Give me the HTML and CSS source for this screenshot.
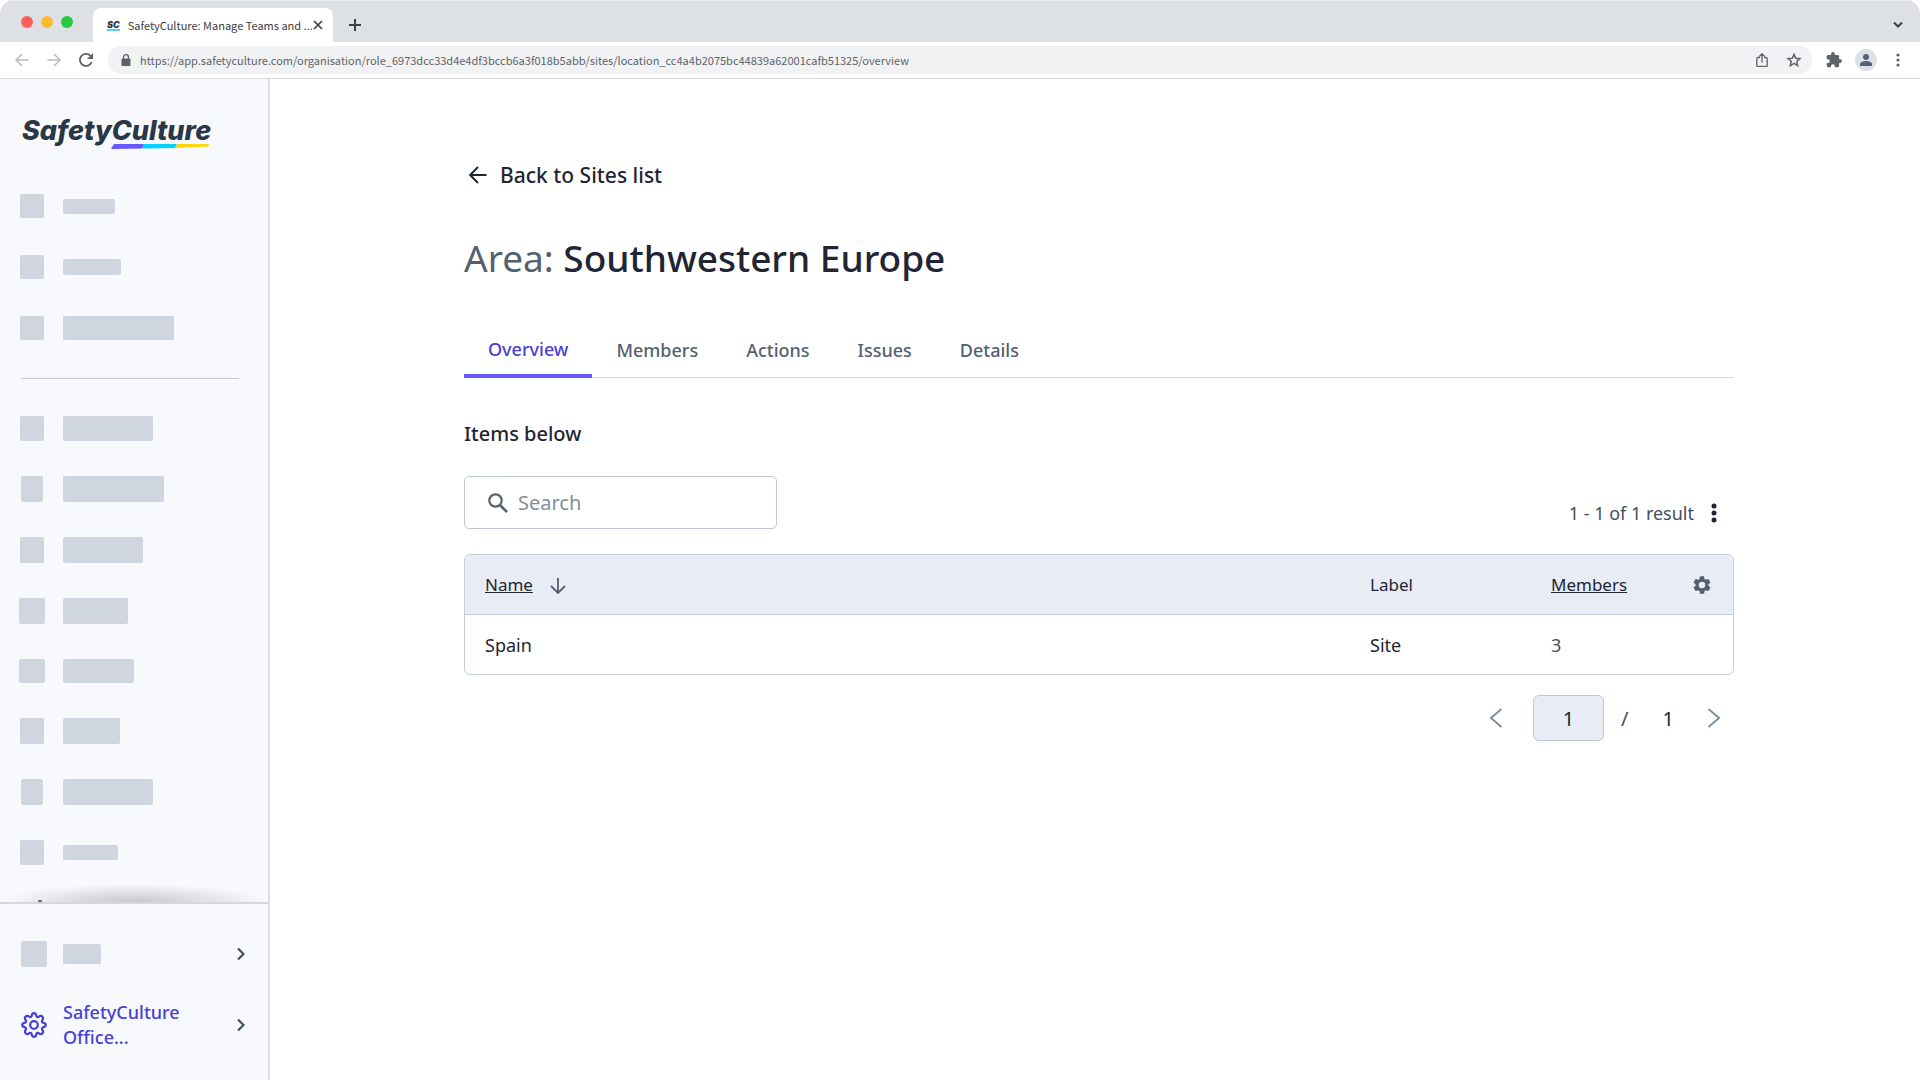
FILE: index.html
```html
<!DOCTYPE html>
<html lang="en">
<head>
  <meta charset="UTF-8" />
  <meta name="viewport" content="width=device-width, initial-scale=1.0" />
  <title>SafetyCulture: Manage Teams and Sites</title>
  <link rel="stylesheet" href="styles.css">
</head>
<body>
  <div class="browser">
    <div class="tab-strip">
      <div class="lights">
        <span class="light red"></span>
        <span class="light yellow"></span>
        <span class="light green"></span>
      </div>
      <div class="browser-tab">
        <span class="favicon">SC</span>
        <span class="tab-title">SafetyCulture: Manage Teams and ...</span>
        <button class="icon-btn" aria-label="Close tab">
          <svg width="10" height="10" viewBox="0 0 10 10"><path d="M1 1l8 8M9 1L1 9" stroke="#3c4043" stroke-width="1.700" fill="none"/></svg>
        </button>
      </div>
      <button class="icon-btn new-tab" aria-label="New tab">
        <svg width="12" height="12" viewBox="0 0 12 12"><path d="M6 0v12M0 6h12" stroke="#3c4043" stroke-width="2" fill="none"/></svg>
      </button>
      <button class="icon-btn tab-search" aria-label="Search tabs">
        <svg width="10" height="8" viewBox="0 0 10 8"><path d="M1 1.500l4 4 4-4" stroke="#3c4043" stroke-width="2" fill="none"/></svg>
      </button>
    </div>

    <div class="toolbar">
      <button class="icon-btn" aria-label="Back">
        <svg width="14" height="14" viewBox="0 0 14 14"><path d="M13.500 7H1.500M7 1L1 7l6 6" stroke="#babcbe" stroke-width="1.500" fill="none"/></svg>
      </button>
      <button class="icon-btn" aria-label="Forward">
        <svg width="14" height="14" viewBox="0 0 14 14"><path d="M.5 7h12M7 1l6 6-6 6" stroke="#babcbe" stroke-width="1.500" fill="none"/></svg>
      </button>
      <button class="icon-btn" aria-label="Reload">
        <svg width="14" height="14" viewBox="0 0 14 14"><path d="M12.600 9A6 6 0 1 1 11.500 3" stroke="#5f6368" stroke-width="1.800" fill="none"/><path d="M14 0v6H8z" fill="#5f6368"/></svg>
      </button>
      <div class="address">
        <svg width="10" height="12" viewBox="0 0 10 12"><path d="M2.500 5V3.200a2.500 2.500 0 0 1 5 0V5" stroke="#5f6368" stroke-width="1.300" fill="none"/><rect x="0.500" y="4.500" width="9" height="7.500" rx="1" fill="#5f6368"/></svg>
        <input class="url" type="text" aria-label="Address" value="https://app.safetyculture.com/organisation/role_6973dcc33d4e4df3bccb6a3f018b5abb/sites/location_cc4a4b2075bc44839a62001cafb51325/overview" />
        <button class="icon-btn" aria-label="Share">
          <svg width="12" height="14" viewBox="0 0 12 14"><path d="M4 4.500H1.800a1 1 0 0 0-1 1v7a1 1 0 0 0 1 1h8.400a1 1 0 0 0 1-1v-7a1 1 0 0 0-1-1H8M6 9.500V1M3.300 3.500L6 .8l2.700 2.700" stroke="#5f6368" stroke-width="1.300" fill="none"/></svg>
        </button>
        <button class="icon-btn" aria-label="Bookmark">
          <svg width="16" height="16" viewBox="0 0 24 24"><path d="M12 3.500l2.600 6 6.400.5-4.900 4.200 1.500 6.300L12 17.200l-5.600 3.300 1.500-6.300L3 10l6.400-.5z" stroke="#5f6368" stroke-width="2.200" fill="none"/></svg>
        </button>
      </div>
      <div class="actions">
        <button class="icon-btn" aria-label="Extensions">
          <svg width="16" height="16" viewBox="1 1 22 22"><path d="M20.500 11H19V7a2 2 0 0 0-2-2h-4V3.500a2.500 2.500 0 0 0-5 0V5H4a2 2 0 0 0-2 2v3.800h1.500a2.700 2.700 0 0 1 0 5.400H2V20c0 1.100.9 2 2 2h3.800v-1.500a2.700 2.700 0 0 1 5.400 0V22H17a2 2 0 0 0 2-2v-4h1.500a2.500 2.500 0 0 0 0-5z" fill="#5f6368"/></svg>
        </button>
        <button class="icon-btn avatar" aria-label="Profile">
          <svg width="12" height="12" viewBox="0 0 12 12"><circle cx="6" cy="3" r="3" fill="#56617a"/><path d="M0 12v-2c0-2 3.500-3 6-3s6 1 6 3v2z" fill="#56617a"/></svg>
        </button>
        <button class="icon-btn menu" aria-label="Menu">
          <svg width="4" height="14" viewBox="0 0 4 14"><g fill="#5f6368"><circle cx="2" cy="2" r="1.600"/><circle cx="2" cy="7" r="1.600"/><circle cx="2" cy="12" r="1.600"/></g></svg>
        </button>
      </div>
    </div>

    <div class="page">
      <aside class="sidebar">
        <a class="logo" href="#" aria-label="SafetyCulture">
          <span>SafetyCulture</span>
          <svg class="logo-line" width="98" height="5" viewBox="0 0 98 5"><path d="M3 0H33L31 4.500 0 5z" fill="#6559ff"/><path d="M33 0H66L64 4 31 4.500z" fill="#00d1ff"/><path d="M66 0H98L97 2.500 64 4z" fill="#ffd60a"/></svg>
        </a>

        <ul class="skeleton-list first">
          <li><i></i><b></b></li>
          <li><i></i><b></b></li>
          <li><i></i><b></b></li>
        </ul>
        <hr />
        <ul class="skeleton-list second">
          <li><i></i><b></b></li>
          <li><i></i><b></b></li>
          <li><i></i><b></b></li>
          <li><i></i><b></b></li>
          <li><i></i><b></b></li>
          <li><i></i><b></b></li>
          <li><i></i><b></b></li>
          <li><i></i><b></b></li>
        </ul>

        <div class="scroll-shadow"><span class="peek"></span></div>
        <div class="sidebar-footer">
          <a class="footer-item" href="#" aria-label="More">
            <span class="box"></span>
            <span class="bar"></span>
            <svg width="8" height="14" viewBox="0 0 8 14"><path d="M1 1.500L6.500 7 1 12.500" stroke="#434f5e" stroke-width="2.200" fill="none"/></svg>
          </a>
          <a class="footer-item account" href="#">
            <svg width="26" height="26" viewBox="0 0 26 26" fill="none" stroke="#4740d4" stroke-width="2.200" stroke-linejoin="round"><circle cx="13" cy="13" r="3.800"/><path d="M10.600 4.200Q11 1.200 13 1.200T15.400 4.200Q16 5.400 17.500 4.900 20 3 21.400 4.600T21.100 8.500Q20.600 10 21.800 10.600 24.800 11 24.800 13T21.800 15.400Q20.600 16 21.100 17.500 23 20 21.400 21.400T17.500 21.100Q16 20.600 15.400 21.800 15 24.800 13 24.800T10.600 21.800Q10 20.600 8.500 21.100 6 23 4.600 21.400T4.900 17.500Q5.400 16 4.200 15.400 1.200 15 1.200 13T4.200 10.600Q5.400 10 4.900 8.500 3 6 4.600 4.600T8.500 4.900Q10 5.400 10.600 4.200z"/></svg>
            <span>SafetyCulture Office...</span>
            <svg width="8" height="14" viewBox="0 0 8 14"><path d="M1 1.500L6.500 7 1 12.500" stroke="#434f5e" stroke-width="2.200" fill="none"/></svg>
          </a>
        </div>
      </aside>

      <main>
        <a class="back" href="#">
          <svg width="18" height="18" viewBox="0 0 18 18"><path d="M17.500 9H1.500M9 1L1.200 9 9 17" stroke="#1f2533" stroke-width="2" fill="none"/></svg>
          Back to Sites list
        </a>
        <h1><span>Area:</span> Southwestern Europe</h1>

        <nav class="tabs">
          <a class="active" href="#">Overview</a>
          <a href="#">Members</a>
          <a href="#">Actions</a>
          <a href="#">Issues</a>
          <a href="#">Details</a>
        </nav>

        <h2>Items below</h2>

        <div class="list-header">
          <label class="search">
            <svg width="20" height="20" viewBox="0 0 20 20"><circle cx="7.500" cy="7.500" r="6.200" stroke="#545f70" stroke-width="2.200" fill="none"/><path d="M12 12l7 7" stroke="#545f70" stroke-width="2.600"/></svg>
            <input type="text" placeholder="Search" aria-label="Search" />
          </label>
          <div class="results">
            <span>1 - 1 of 1 result</span>
            <button class="icon-btn" aria-label="More options">
              <svg width="6" height="20" viewBox="0 0 6 20"><g fill="#1f2533"><circle cx="3" cy="3" r="2.500"/><circle cx="3" cy="10" r="2.500"/><circle cx="3" cy="17" r="2.500"/></g></svg>
            </button>
          </div>
        </div>

        <table>
          <thead>
            <tr>
              <th>
                <a href="#">Name</a>
                <svg class="sort" width="16" height="16" viewBox="0 0 16 16"><path d="M8 0v14.500M1 8l7 7 7-7" stroke="#545f70" stroke-width="1.800" fill="none"/></svg>
              </th>
              <th class="col-label">Label</th>
              <th class="col-members"><a href="#">Members</a></th>
              <th class="col-settings">
                <button class="icon-btn" aria-label="Table settings">
                  <svg width="18" height="18" viewBox="2 2 20 20"><path d="M19.140 12.940c.04-.3.060-.61.060-.94s-.02-.64-.07-.94l2.030-1.580a.49.49 0 0 0 .12-.61l-1.920-3.320a.49.49 0 0 0-.59-.22l-2.390.96a7 7 0 0 0-1.620-.94l-.36-2.540a.48.48 0 0 0-.48-.41h-3.840a.48.48 0 0 0-.47.41l-.36 2.540a7.400 7.400 0 0 0-1.620.94l-2.390-.96a.48.48 0 0 0-.59.22L2.740 8.870a.48.48 0 0 0 .12.610l2.030 1.580a6 6 0 0 0 0 1.880l-2.030 1.580a.49.49 0 0 0-.12.610l1.920 3.320c.12.220.370.290.590.220l2.390-.96c.5.380 1.030.7 1.620.94l.36 2.540c.05.240.240.410.480.410h3.840c.24 0 .44-.17.470-.41l.36-2.540a7 7 0 0 0 1.620-.94l2.390.96c.22.080.470 0 .59-.22l1.920-3.320a.48.48 0 0 0-.12-.61zM12 15.600a3.600 3.600 0 1 1 0-7.200 3.600 3.600 0 0 1 0 7.200z" fill="#545f70"/></svg>
                </button>
              </th>
            </tr>
          </thead>
          <tbody>
            <tr>
              <td>Spain</td>
              <td>Site</td>
              <td class="count">3</td>
              <td></td>
            </tr>
          </tbody>
        </table>

        <div class="pagination">
          <button class="icon-btn" aria-label="Previous page">
            <svg width="14" height="20" viewBox="0 0 14 20"><path d="M12.500 1L2 10l10.500 9" stroke="#828ea0" stroke-width="2" fill="none"/></svg>
          </button>
          <input type="text" value="1" aria-label="Page" />
          <span class="slash">/</span>
          <span class="total">1</span>
          <button class="icon-btn" aria-label="Next page">
            <svg width="14" height="20" viewBox="0 0 14 20"><path d="M1.500 1L12 10 1.500 19" stroke="#828ea0" stroke-width="2" fill="none"/></svg>
          </button>
        </div>
      </main>
    </div>
  </div>
</body>
</html>
```
FILE: styles.css
```css
* {
  box-sizing: border-box;
}
body {
  margin: 0;
  background-color: #fff;
  font-family: "Noto Sans", sans-serif;
  font-size: 18px;
  color: #1f2533;
}
a {
  color: inherit;
  text-decoration: none;
}
svg {
  display: block;
  flex-shrink: 0;
}
.icon-btn {
  display: flex;
  align-items: center;
  justify-content: center;
  padding: 0;
  border: none;
  background: none;
  cursor: pointer;
}
.browser {
  display: flex;
  flex-direction: column;
  min-height: 100vh;
  border-radius: 14px 14px 0 0;
  overflow: hidden;
}

/* browser chrome */
.tab-strip {
  display: flex;
  align-items: flex-end;
  height: 42px;
  padding: 0 17px 0 21px;
  background-color: #dde1e6;
  border-top: 1px solid #e9edf0;
  font-family: "Noto Sans CJK SC", sans-serif;
}
.lights {
  display: flex;
  gap: 8px;
  width: 72px;
  padding-bottom: 14px;
}
.light {
  width: 12px;
  height: 12px;
  border-radius: 50%;
}
.red {
  background-color: #ff5f57;
}
.yellow {
  background-color: #febc2e;
}
.green {
  background-color: #28c840;
}
.browser-tab {
  display: flex;
  align-items: center;
  width: 240px;
  height: 34px;
  padding: 0 11px 0 14px;
  border-radius: 8px 8px 0 0;
  background-color: #fff;
}
.favicon {
  width: 13px;
  border-bottom: 2px solid #5fd0f5;
  font: italic 900 9px/9px Inter, sans-serif;
  color: #2a3746;
}
.tab-title {
  flex: 1;
  margin-left: 8px;
  font-size: 11px;
  line-height: 16px;
  color: #3c4043;
  white-space: nowrap;
}
.new-tab {
  height: 34px;
  margin-left: 16px;
}
.tab-search {
  height: 34px;
  margin-left: auto;
}
.toolbar {
  display: flex;
  align-items: center;
  gap: 18px;
  height: 37px;
  padding: 0 20px 0 15px;
  border-bottom: 1px solid #d8dade;
}
.address {
  display: flex;
  flex: 1;
  align-items: center;
  gap: 18px;
  height: 28px;
  margin-left: -3px;
  padding: 0 10px 0 13px;
  border-radius: 14px;
  background-color: #f1f2f4;
}
.url {
  flex: 1;
  margin-left: -9px;
  padding: 0;
  border: none;
  background: none;
  font-family: "Noto Sans CJK SC", sans-serif;
  font-size: 11px;
  line-height: 16px;
  color: #5f6368;
}
.actions {
  display: flex;
  align-items: center;
  gap: 13px;
  margin-left: -4px;
}
.avatar {
  width: 22px;
  height: 22px;
  border-radius: 50%;
  background-color: #dde1e6;
}
.menu {
  margin-left: 6px;
}

/* sidebar */
.page {
  display: flex;
  flex: 1;
}
.sidebar {
  display: flex;
  flex-direction: column;
  width: 270px;
  border-right: 2px solid #dadfe8;
  background-color: #f8f9fd;
}
.logo {
  position: relative;
  height: 78px;
  margin: 37px 0 0 22px;
  font: italic 800 27px/30px Inter, sans-serif;
  color: #2a3746;
}
.logo-line {
  position: absolute;
  top: 28px;
  left: 89px;
}
.skeleton-list {
  display: flex;
  flex-direction: column;
  margin: 0 0 0 18px;
  padding: 0;
  list-style: none;
}
.skeleton-list li {
  display: grid;
  grid-template-columns: 28px 1fr;
  column-gap: 17px;
  align-items: center;
  height: 26px;
}
.skeleton-list i {
  width: 24px;
  height: 100%;
  border-radius: 2px;
  background-color: #cfd6e0;
  justify-self: center;
}
.skeleton-list b {
  width: 90px;
  height: 100%;
  border-radius: 2px;
  background-color: #cfd6e0;
}
.first {
  gap: 37px;
}
.first li {
  height: 24px;
}
.first li:nth-child(1) b {
  width: 52px;
  height: 15px;
}
.first li:nth-child(2) b {
  width: 58px;
  height: 16px;
}
.first li:nth-child(3) b {
  width: 111px;
}
hr {
  width: 218px;
  margin: 38px 0 37px 21px;
  border: none;
  border-top: 1px solid #c3c8dc;
}
.second {
  gap: 35px;
}
.second li:nth-child(1) {
  height: 25px;
}
.second li:nth-child(2) i {
  width: 22px;
}
.second li:nth-child(2) b {
  width: 101px;
}
.second li:nth-child(3) b {
  width: 80px;
}
.second li:nth-child(4) i {
  width: 26px;
}
.second li:nth-child(4) b {
  width: 65px;
}
.second li:nth-child(5) {
  height: 24px;
}
.second li:nth-child(5) i {
  width: 26px;
}
.second li:nth-child(5) b {
  width: 71px;
}
.second li:nth-child(6) b {
  width: 57px;
}
.second li:nth-child(7) i {
  width: 22px;
}
.second li:nth-child(8) {
  height: 25px;
}
.second li:nth-child(8) b {
  width: 55px;
  height: 15px;
}
.scroll-shadow {
  height: 18px;
  margin-top: auto;
  background: radial-gradient(ellipse 50% 100% at bottom, rgba(0, 0, 0, 0.2), rgba(0, 0, 0, 0));
}
.peek {
  display: block;
  width: 4px;
  height: 18px;
  margin-left: 38px;
  background: linear-gradient(#6b7585, #6b7585) bottom / 4px 2px no-repeat;
}
.sidebar-footer {
  height: 178px;
  padding: 35px 23px 0 21px;
  border-top: 2px solid #d3d6e4;
}
.footer-item {
  display: grid;
  grid-template-columns: 26px 1fr 8px;
  column-gap: 16px;
  align-items: center;
  min-height: 30px;
}
.box {
  height: 26px;
  border-radius: 2px;
  background-color: #cfd6e0;
}
.bar {
  width: 38px;
  height: 20px;
  border-radius: 2px;
  background-color: #cfd6e0;
}
.account {
  margin-top: 31px;
  line-height: 25px;
  font-weight: 500;
  color: #4740d4;
}

/* content */
main {
  flex: 1;
  padding: 80px 186px 0 194px;
}
.back {
  display: flex;
  align-items: center;
  gap: 13px;
  padding-left: 5px;
  font-size: 21px;
  font-weight: 500;
  line-height: 32px;
}
h1 {
  margin: 43px 0 0;
  font-size: 37px;
  font-weight: 500;
  line-height: 48px;
}
h1 span {
  font-weight: 400;
  color: #545f70;
}
.tabs {
  display: flex;
  margin-top: 42px;
  border-bottom: 1px solid #d3d8e3;
}
.tabs a {
  padding: 12px 24px;
  font-weight: 500;
  line-height: 29px;
  color: #545f70;
}
.tabs .active {
  margin-bottom: -1px;
  padding: 11px 24px 10px;
  border-bottom: 4px solid #6559ff;
  color: #4740d4;
}
h2 {
  margin: 42px 0 0;
  font-size: 20px;
  font-weight: 500;
  line-height: 28px;
}
.list-header {
  display: flex;
  justify-content: space-between;
  margin-top: 28px;
}
.search {
  display: flex;
  align-items: center;
  gap: 10px;
  width: 313px;
  height: 53px;
  padding: 0 23px;
  border: 1px solid #bfc6d6;
  border-radius: 5px;
}
.search input {
  flex: 1;
  min-width: 0;
  padding: 0;
  border: none;
  background: none;
  font: inherit;
  font-size: 20px;
}
.search input::placeholder {
  color: #828ea0;
  opacity: 1;
}
.results {
  display: flex;
  align-items: center;
  gap: 17px;
  padding: 21px 17px 0 0;
  color: #434f5e;
}
table {
  width: 100%;
  margin-top: 25px;
  border: 1px solid #c6ccdb;
  border-radius: 6px;
  border-collapse: separate;
  border-spacing: 0;
  overflow: hidden;
}
th {
  height: 60px;
  padding: 0 0 0 20px;
  border-bottom: 1px solid #c6ccdb;
  background-color: #e8ecf5;
  font-size: 17px;
  font-weight: 400;
  text-align: left;
}
th a {
  text-decoration: underline;
}
.sort {
  display: inline-block;
  margin-left: 13px;
  vertical-align: middle;
}
td {
  height: 59px;
  padding: 0 0 0 20px;
}
.count {
  color: #434f5e;
}
.col-label {
  width: 181px;
}
.col-members {
  width: 142px;
}
.col-settings {
  width: 60px;
}
.pagination {
  display: flex;
  align-items: center;
  justify-content: flex-end;
  margin-top: 20px;
  padding-right: 13px;
  font-size: 20px;
}
.pagination input {
  width: 71px;
  height: 46px;
  margin: 0 17px 0 30px;
  border: 1px solid #bfc6d6;
  border-radius: 6px;
  background-color: #e8ecf5;
  font: inherit;
  color: inherit;
  text-align: center;
}
.slash {
  margin-right: 34px;
  color: #434f5e;
}
.total {
  margin-right: 33px;
}
```
